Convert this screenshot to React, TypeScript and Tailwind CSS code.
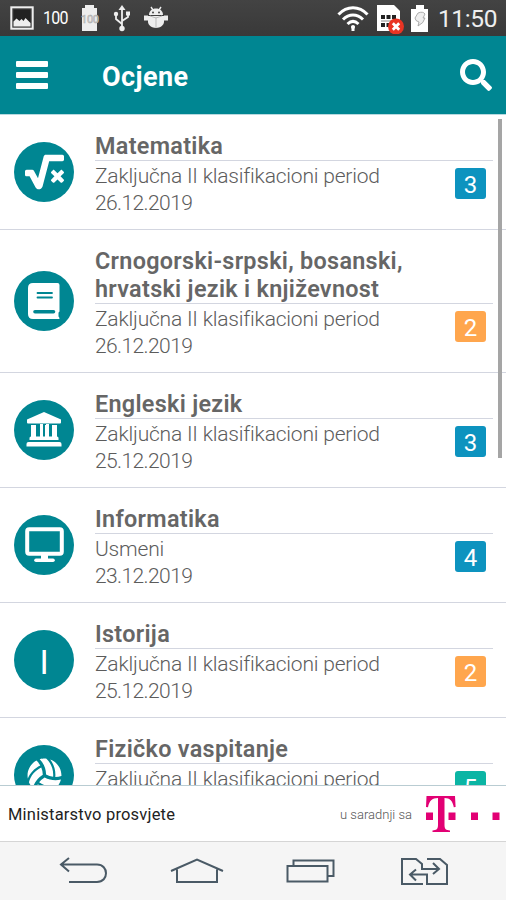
import type { ReactNode } from 'react'
import { FaSearch, FaSquareRootAlt, FaVolleyballBall } from 'react-icons/fa'
import { clsx } from 'clsx'

interface Grade {
  subject: string
  kind: string
  date: string
  grade: number
  icon: ReactNode
}

function MonitorIcon() {
  return (
    <svg width="39" height="36" viewBox="0 0 39 36" fill="none" stroke="white">
      <rect x="2.2" y="2.2" width="34.6" height="24.6" rx="2" strokeWidth="4" />
      <path d="M16 28h7v4h-7z" fill="white" stroke="none" />
      <path d="M11 33.2h17" strokeWidth="3.6" strokeLinecap="round" />
    </svg>
  )
}

function BookIcon() {
  return (
    <svg width="32" height="36" viewBox="0 0 32 36" fill="white">
      <path d="M5 0h24.500q2 0 2 2v26q0 1-1 1.500v4q1 .5 1 2.500H5q-5 0-5-5V5q0-5 5-5z" />
      <path d="M9.500 10h14.500M9.500 14.500h14.500" stroke="#008692" strokeWidth="1.800" strokeLinecap="round" />
      <path d="M7 28.700h18.500" stroke="#008692" strokeWidth="3.600" strokeLinecap="round" />
    </svg>
  )
}

function MuseumIcon() {
  return (
    <svg width="36" height="36" viewBox="0 0 36 36" fill="white">
      <path d="M18 0l17 7.500v3q0 1-1 1H2q-1 0-1-1v-3z" />
      <path d="M5 13h5v11.500h4V13h3v11.500h2V13h3v11.500h4V13h5v11.500q1.500 0 1.500 1.500v2H3.500v-2q0-1.500 1.500-1.500z" />
      <path d="M13 13h10v0zM14 12h3v13h-3zM20 12h3v13h-3z" />
      <path d="M2.500 30h31q2 0 2 2v2.500H.5V32q0-2 2-2z" />
    </svg>
  )
}

const GRADES: Grade[] = [
  {
    subject: 'Matematika',
    kind: 'Zaključna II klasifikacioni period',
    date: '26.12.2019',
    grade: 3,
    icon: <FaSquareRootAlt className="w-[39px] h-[36px]" />,
  },
  {
    subject: 'Crnogorski-srpski, bosanski, hrvatski jezik i književnost',
    kind: 'Zaključna II klasifikacioni period',
    date: '26.12.2019',
    grade: 2,
    icon: <BookIcon />,
  },
  {
    subject: 'Engleski jezik',
    kind: 'Zaključna II klasifikacioni period',
    date: '25.12.2019',
    grade: 3,
    icon: <MuseumIcon />,
  },
  {
    subject: 'Informatika',
    kind: 'Usmeni',
    date: '23.12.2019',
    grade: 4,
    icon: <MonitorIcon />,
  },
  {
    subject: 'Istorija',
    kind: 'Zaključna II klasifikacioni period',
    date: '25.12.2019',
    grade: 2,
    icon: <span className="text-[34px] leading-none font-normal pt-1">I</span>,
  },
  {
    subject: 'Fizičko vaspitanje',
    kind: 'Zaključna II klasifikacioni period',
    date: '25.12.2019',
    grade: 5,
    icon: <FaVolleyballBall className="w-[35px] h-[35px]" />,
  },
]

function gradeColor(grade: number): string {
  if (grade === 5) return 'bg-[#0bb5a4]'
  if (grade === 2) return 'bg-[#ffa64d]'
  return 'bg-[#0d93bf]'
}

function StatusBar() {
  return (
    <div className="h-9 shrink-0 flex items-center justify-between bg-gradient-to-b from-[#434343] to-[#393939] text-white">
      <div className="flex items-center pl-[10px]">
        <svg width="24" height="24" viewBox="0 0 24 24" fill="none">
          <rect x="1.3" y="1.3" width="21.4" height="21.4" stroke="#eee" strokeWidth="2" />
          <rect x="3.5" y="3.5" width="17" height="17" fill="#222" />
          <path d="M3.5 20.5v-5l3-3 3 2.5 2-2 2 2 2-3 5 5v3.500z" fill="#eee" />
        </svg>
        <span className="ml-[9px] w-[26px] text-[19px] leading-6 tracking-[-0.8px] whitespace-nowrap origin-left scale-x-[0.84]">
          100
        </span>
        <svg className="ml-[11px]" width="20" height="28" viewBox="0 0 20 28">
          <path d="M5 1h9v3h3v23H2V4h3z" fill="#eee" />
          <text x="10" y="19" textAnchor="middle" fontSize="11" fill="#eee" stroke="#aaa" strokeWidth=".6" textLength="18">
            100
          </text>
        </svg>
        <svg className="ml-[13px]" width="18" height="28" viewBox="0 0 18 28" fill="none" stroke="#eee" strokeWidth="1.8">
          <path d="M9 4v20M9 20l-6-5v-5M9 17l6-4V9" />
          <path d="M5.500 6L9 1l3.500 5z" fill="#eee" stroke="none" />
          <circle cx="9" cy="24.500" r="2.700" fill="#eee" stroke="none" />
          <circle cx="3" cy="10" r="2.200" fill="#eee" stroke="none" />
          <path d="M13 7.500h4v4h-4z" fill="#eee" stroke="none" />
        </svg>
        <svg className="ml-[12px]" width="26" height="24" viewBox="0 0 26 24" fill="#eee">
          <path d="M6 9c0-4 3-6.500 7-6.500S20 5 20 9z" />
          <path d="M8 1l2 3M18 1l-2 3" stroke="#eee" strokeWidth="1.4" />
          <path d="M5 10h16v6c0 3-4 6-8 6s-8-3-8-6z" />
          <path d="M1 9.500h4v5H1zM21 9.500h4v5h-4z" />
          <path d="M13 11v11M7 10l6 2 6-2" stroke="#bbb" strokeWidth="1" fill="none" />
          <circle cx="10" cy="6.500" r="1" fill="#444" />
          <circle cx="16" cy="6.500" r="1" fill="#444" />
        </svg>
      </div>
      <div className="flex items-center pr-[9px]">
        <svg className="mt-[2px]" width="32" height="26" viewBox="0 0 32 26" fill="none" stroke="white" strokeWidth="3">
          <path d="M1.500 8.500C10-.5 22-.5 30.500 8.500" />
          <path d="M6 13.500c6-6 14-6 20 0" />
          <path d="M10.500 18c3.500-3.300 7.500-3.300 11 0" />
          <circle cx="16" cy="21" r="2" fill="white" stroke="none" />
          <path d="M16 20v5" />
        </svg>
        <svg className="ml-[7px]" width="29" height="32" viewBox="0 0 29 32">
          <path d="M1 3h17l6 6v20H1z" fill="white" />
          <path d="M5 13h4v4H5zM10.500 13h4v4h-4zM16 13h4v4h-4zM5 21h4v4H5zM10.500 21h3v4h-3z" fill="#222" />
          <path d="M5 19h12" stroke="#888" />
          <circle cx="20" cy="24.500" r="8" fill="#e93423" />
          <path d="M16.800 21.300l6.400 6.400M23.200 21.300l-6.400 6.400" stroke="white" strokeWidth="2.800" />
        </svg>
        <svg className="ml-[5px]" width="19" height="29" viewBox="0 0 19 29">
          <path d="M6 1h8v4h4v23H1V5h5z" fill="white" />
          <path d="M8 9q5-2 7 1l-2 4h2q-1 5-7 8l1-4q-4-1-4-4z" fill="#eee" stroke="#999" strokeWidth=".8" />
        </svg>
        <span className="ml-[9px] w-[59px] text-[24.500px] leading-9 tracking-[-0.4px] pt-[2px] whitespace-nowrap text-[#eee]">
          11:50
        </span>
      </div>
    </div>
  )
}

function GradeRow({ item }: { item: Grade }) {
  return (
    <div className="flex items-center pl-[14px] pr-[13px] border-b border-[#d3d6e0] shrink-0">
      <div className="w-[60px] h-[60px] shrink-0 rounded-full bg-[#008692] text-white flex items-center justify-center">
        {item.icon}
      </div>
      <div className="ml-[21px] flex-1 min-w-0 pt-[17px] pb-[13px]">
        <h3 className="text-[23.4px] leading-7 font-semibold tracking-[0.3px] text-[#666] border-b border-[#d3d6e0] pr-16">
          {item.subject}
        </h3>
        <div className="flex justify-between items-start">
          <div className="pt-[2px] text-[21px] font-light text-[#5c5c5c]">
            <p className="leading-[27px] whitespace-nowrap tracking-[-0.2px]">{item.kind}</p>
            <p className="leading-[26px] tracking-[-0.6px]">{item.date}</p>
          </div>
          <div
            className={clsx(
              'w-[31px] h-[31px] mt-[7px] mr-[7px] rounded-[3px] flex items-center justify-center text-white text-[24px] leading-none pt-[3px]',
              gradeColor(item.grade),
            )}
          >
            {item.grade}
          </div>
        </div>
      </div>
    </div>
  )
}

function Footer() {
  return (
    <div className="h-[57px] shrink-0 flex items-center border-t border-[#b9ccd2] border-b border-b-[#d5d5d5] bg-white pl-2 pr-[6px]">
      <span className="pt-[3px] text-[16.500px] tracking-[0.2px] text-[#222]">Ministarstvo prosvjete</span>
      <span className="ml-auto pt-[2px] text-[13px] font-light text-[#555]">u saradnji sa</span>
      <svg className="ml-[13px]" width="75" height="38" viewBox="0 0 75 38" fill="#e20074">
        <path d="M1.500 1h28.500l.6 11-1.800.3C27.600 6 25 3 19.500 3v27c0 4 1.500 5.200 5.500 5.500V37H7.500v-1.500c4-.3 5.500-1.500 5.500-5.500V3C7 3 4.200 6 3 12.300L1 12z" />
        <path d="M1 17.500h7v7.500H1zM23.500 17.500h7v7.500h-7zM46 17.500h7v7.500h-7zM67.500 17.500h7v7.500h-7z" />
      </svg>
    </div>
  )
}

function NavBar() {
  return (
    <div className="h-[58px] shrink-0 bg-[#f5f5f5]">
      <svg width="506" height="58" viewBox="0 0 506 58" fill="none" stroke="#4a5a66" strokeWidth="2">
        <path d="M69 16l-8 6.500 8 7M61 22.500h36c12 0 12 17.500 0 17.500H69" />
        <path d="M171 29l26-11.500 26 11.500M177 27.500v12.500h40V27.500" />
        <path d="M287.500 24h40v15.500h-40zM293.500 24v-5.500h40v15.500h-6" />
        <path d="M423 42h-21V17h14l6 5v5h16M433 21l6 6-6 5M427 17h13l7 6v19h-20V32.500h-16M416 27.500l-6 5 6 6" />
      </svg>
    </div>
  )
}

export default function App() {
  return (
    <div className="w-[506px] h-[900px] flex flex-col overflow-hidden bg-white font-[Roboto,sans-serif]">
      <StatusBar />
      <header className="h-[79px] shrink-0 flex items-center bg-[#008692] border-b border-[#b7d9df] text-white pl-4 pr-[14px]">
        <div className="flex flex-col gap-[5px]">
          <div className="w-8 h-[6px] rounded-[1px] bg-white" />
          <div className="w-8 h-[6px] rounded-[1px] bg-white" />
          <div className="w-8 h-[6px] rounded-[1px] bg-white" />
        </div>
        <h1 className="ml-[54px] text-[27px] font-bold tracking-[0.4px] pt-1">Ocjene</h1>
        <FaSearch className="ml-auto w-8 h-8" />
      </header>
      <main className="relative h-[670px] shrink-0 flex flex-col overflow-hidden">
        {GRADES.map((item) => (
          <GradeRow key={item.subject} item={item} />
        ))}
        <div className="absolute right-1 top-1 w-1 h-[339px] bg-[#a5a5a5]" />
      </main>
      <Footer />
      <NavBar />
    </div>
  )
}
